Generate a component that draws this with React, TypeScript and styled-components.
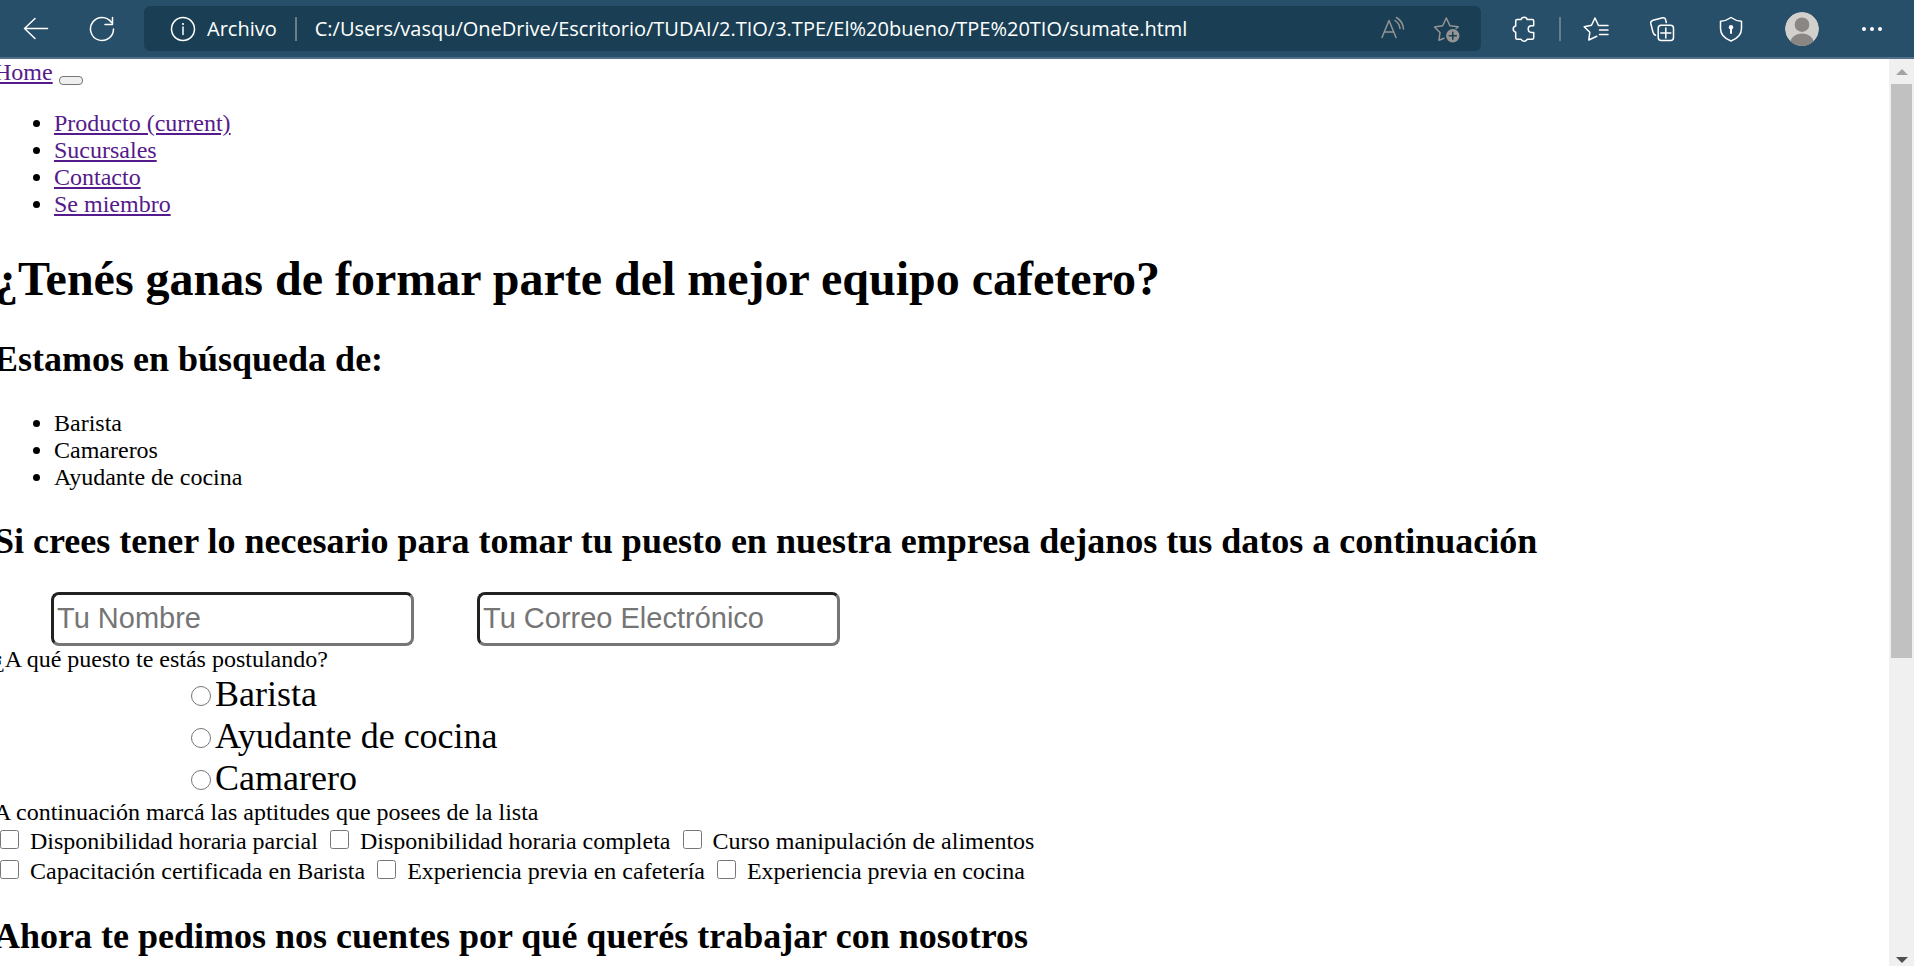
import React from "react";
import styled, { createGlobalStyle } from "styled-components";

const GlobalStyle = createGlobalStyle`
  *, *::before, *::after { box-sizing: border-box; }
  html, body { margin: 0; padding: 0; background: #fff; }
  body { overflow: hidden; }
`;

const Window = styled.div`
  display: flex;
  flex-direction: column;
  height: 100vh;
  padding-right: 6px;
`;

const Toolbar = styled.header`
  display: flex;
  align-items: center;
  flex: none;
  height: 59px;
  padding: 0 26px 0 20px;
  background: #284f69;
  border-bottom: 2px solid #527089;
  color: #fff;
`;

const IconButton = styled.button<{ $gap?: number; $dim?: boolean }>`
  display: flex;
  flex: none;
  align-items: center;
  justify-content: center;
  width: 32px;
  height: 36px;
  margin: 0 ${(p) => p.$gap ?? 0}px 0 0;
  padding: 0;
  border: 0;
  background: none;
  color: ${(p) => (p.$dim ? "#949494" : "#fff")};
`;

const Icon = styled.svg`
  display: block;
  flex: none;
  fill: none;
  stroke: currentColor;
  stroke-width: 1.5;
  stroke-linecap: round;
  stroke-linejoin: round;
`;

const AddressBar = styled.div`
  display: flex;
  flex: 1;
  align-items: center;
  height: 45px;
  margin-right: 27px;
  padding: 0 18px 0 26px;
  border-radius: 6px;
  background: #1a3f54;
`;

const Scheme = styled.span`
  margin-left: 11px;
  font: 20px/28px "Open Sans", "Noto Sans", sans-serif;
`;

const AddressInput = styled.input`
  flex: 1;
  min-width: 0;
  height: 32px;
  padding: 0;
  border: 0;
  outline: 0;
  background: none;
  color: #fff;
  font: 20px/28px "Open Sans", "Noto Sans", sans-serif;
`;

const Divider = styled.span<{ $space: number }>`
  flex: none;
  width: 2px;
  height: 24px;
  margin: 0 ${(p) => p.$space}px 0 0;
  background: #64808f;
`;

const AddressDivider = styled(Divider)`
  margin-left: 18px;
`;

const Body = styled.div`
  display: flex;
  flex: 1;
  min-height: 0;
`;

const Page = styled.main`
  flex: 1;
  min-width: 0;
  overflow: hidden;
  margin-left: -6px;
  color: #000;
  font: 24px/27px "Liberation Serif", "Times New Roman", serif;
`;

const PageLink = styled.a`
  color: #551a8b;
  text-decoration: underline;
`;

const Toggler = styled.button`
  width: 24px;
  height: 9px;
  padding: 0;
  border: 1px solid #767676;
  border-radius: 4px;
  background: #efefef;
  vertical-align: text-bottom;
`;

const List = styled.ul`
  margin: 24px 0;
  padding-left: 60px;
`;

const Title = styled.h1`
  margin: 33px 0;
  font-size: 48px;
  line-height: 55px;
`;

const Subtitle = styled.h2`
  margin: 30px 0;
  font-size: 36px;
  line-height: 41px;
`;

const Fields = styled.div`
  display: flex;
  gap: 63px;
  padding-left: 57px;
`;

const TextField = styled.input`
  width: 363px;
  height: 54px;
  padding: 0 4px 2px 3px;
  border: 3px inset #767676;
  border-radius: 8px;
  background: #fff;
  font: 29px/34px "Liberation Sans", Arial, sans-serif;
  &::placeholder { color: #757575; opacity: 1; }
`;

const Positions = styled.div`
  padding-left: 197px;
  font-size: 36px;
  line-height: 42px;
`;

const Position = styled.label`
  display: flex;
  align-items: center;
  gap: 4px;
  input { width: 20px; height: 20px; margin: 4px 0 0; }
`;

const Skills = styled.div`
  display: flex;
  gap: 12px;
  padding-left: 6px;
  line-height: 30px;
`;

const Skill = styled.label`
  display: flex;
  gap: 11px;
  input { width: 19px; height: 19px; margin: 4px 0 0; }
`;

const Scrollbar = styled.div`
  display: flex;
  flex: none;
  flex-direction: column;
  align-items: center;
  width: 25px;
  background: #f0f0f0;
`;

const ScrollArrow = styled.button<{ $height: number }>`
  display: flex;
  align-items: center;
  justify-content: center;
  width: 25px;
  height: ${(p) => p.$height}px;
  padding: 0;
  border: 0;
  background: none;
`;

const Track = styled.div`
  flex: 1;
  width: 21px;
`;

const Thumb = styled.div`
  height: 66%;
  background: #c1c1c1;
`;

const links = ["Producto (current)", "Sucursales", "Contacto", "Se miembro"];
const openings = ["Barista", "Camareros", "Ayudante de cocina"];
const positions = ["Barista", "Ayudante de cocina", "Camarero"];
const skills = [
  ["Disponibilidad horaria parcial", "Disponibilidad horaria completa", "Curso manipulación de alimentos"],
  ["Capacitación certificada en Barista", "Experiencia previa en cafetería", "Experiencia previa en cocina"],
];

function BrowserToolbar() {
  return (
    <Toolbar>
      <IconButton $gap={34} aria-label="Atrás">
        <Icon width="26" height="26" viewBox="0 0 26 26"><path d="M24.500 12.500H1.500M12 2.500l-10.500 10 10.500 10" /></Icon>
      </IconButton>
      <IconButton $gap={26} aria-label="Actualizar">
        <Icon width="26" height="26" viewBox="0 0 26 26"><path d="M24.500 13A11.500 11.500 0 1 1 22.500 6.500M23.500 1.500V8.500H16" /></Icon>
      </IconButton>
      <AddressBar>
        <Icon width="26" height="26" viewBox="0 0 26 26">
          <circle cx="13" cy="13" r="11.500" />
          <path d="M13 11v7.500" />
          <circle cx="13" cy="8" r="1.100" fill="currentColor" stroke="none" />
        </Icon>
        <Scheme>Archivo</Scheme>
        <AddressDivider $space={18} />
        <AddressInput aria-label="Dirección" defaultValue="C:/Users/vasqu/OneDrive/Escritorio/TUDAI/2.TIO/3.TPE/El%20bueno/TPE%20TIO/sumate.html" />
        <IconButton $gap={22} $dim aria-label="Leer en voz alta">
          <Icon width="26" height="26" viewBox="0 0 26 26"><path d="M2 21.500 9 4.500l7 17M4.200 16h9.600M15 4.500q4.500 3 5 8M16.500 1.500q6.500 4 7 11.500" /></Icon>
        </IconButton>
        <IconButton $dim aria-label="Agregar a favoritos">
          <Icon width="28" height="28" viewBox="0 0 28 28">
            <path d="M11 23.300 6 25.200l1-7.700L1.500 12l8.200-1.300 3.600-7.700 3.600 7.700 8.300 1.100-2 1.600" />
            <circle cx="19.800" cy="20.800" r="6.700" fill="currentColor" stroke="none" />
            <path stroke="#1a3f54" d="M19.800 17.300v7M16.300 20.800h7" />
          </Icon>
        </IconButton>
      </AddressBar>
      <IconButton $gap={19} aria-label="Extensiones">
        <Icon width="26" height="26" viewBox="0 0 26 26" strokeWidth="1.700">
          <path d="M6.200 3.500H10q.8-2.300 3.200-2.300T16.200 3.500h5a1.500 1.500 0 0 1 1.500 1.500v4.800h-2.200a3.300 3.300 0 0 0 0 6.600h2.200v5.400a1.500 1.500 0 0 1-1.500 1.500h-5q-.6 1.900-3 1.900T10 23.300H6.200a1.500 1.500 0 0 1-1.500-1.500v-5.600Q2.200 15.500 2.200 13t2.500-3V5a1.500 1.500 0 0 1 1.500-1.500z" />
        </Icon>
      </IconButton>
      <Divider $space={19} />
      <IconButton $gap={34} aria-label="Favoritos">
        <Icon width="26" height="26" viewBox="0 0 26 26">
          <path d="M25 9.500h-9.500L12 2 8.500 9.300 1.200 10.800 6.800 16.200 5.800 24l8-3.800M16.500 14H25M16.500 18.500H25" />
        </Icon>
      </IconButton>
      <IconButton $gap={37} aria-label="Colecciones">
        <Icon width="26" height="26" viewBox="0 0 26 26">
          <rect x="9.200" y="9.200" width="15.300" height="15.300" rx="3" />
          <path d="M16.800 12v10M11.800 17h10M17.300 6.500l-.8-3.200q-.6-2-2.800-1.600L4 4.200q-2.700.8-2.200 3.300l2.200 8.800q.6 2.100 2.500 2.900" />
        </Icon>
      </IconButton>
      <IconButton $gap={39} aria-label="Seguridad">
        <Icon width="26" height="26" viewBox="0 0 26 26">
          <path d="M13 1.500q4.700 3.400 10.500 3.800v7.200q0 8.500-10.500 12.500Q2.500 21 2.500 12.500V5.300Q8.300 4.900 13 1.500z" />
          <circle cx="13" cy="11.300" r="2.200" fill="currentColor" stroke="none" />
          <path d="M13 12v5" strokeWidth="2" />
        </Icon>
      </IconButton>
      <IconButton $gap={38} aria-label="Perfil">
        <Icon width="34" height="34" viewBox="0 0 34 34">
          <clipPath id="avatar"><circle cx="17" cy="17" r="17" /></clipPath>
          <g clipPath="url(#avatar)" stroke="none">
            <circle cx="17" cy="17" r="17" fill="#d2d0cd" />
            <circle cx="17" cy="12.700" r="7.300" fill="#8a8683" />
            <ellipse cx="17" cy="32" rx="12" ry="10.500" fill="#8a8683" />
          </g>
        </Icon>
      </IconButton>
      <IconButton aria-label="Configuración y más">
        <Icon width="26" height="26" viewBox="0 0 26 26">
          <g fill="currentColor" stroke="none"><circle cx="5" cy="13" r="2" /><circle cx="13" cy="13" r="2" /><circle cx="21" cy="13" r="2" /></g>
        </Icon>
      </IconButton>
    </Toolbar>
  );
}

export default function App() {
  return (
    <Window>
      <GlobalStyle />
      <BrowserToolbar />
      <Body>
        <Page>
          <nav>
            <PageLink href="#home">Home</PageLink> <Toggler aria-label="Menú" />
            <List>{links.map((t) => <li key={t}><PageLink href="#nav">{t}</PageLink></li>)}</List>
          </nav>
          <Title>¿Tenés ganas de formar parte del mejor equipo cafetero?</Title>
          <Subtitle>Estamos en búsqueda de:</Subtitle>
          <List>{openings.map((t) => <li key={t}>{t}</li>)}</List>
          <Subtitle>Si crees tener lo necesario para tomar tu puesto en nuestra empresa dejanos tus datos a continuación</Subtitle>
          <form>
            <Fields>
              <TextField aria-label="Tu Nombre" placeholder="Tu Nombre" />
              <TextField aria-label="Tu Correo Electrónico" placeholder="Tu Correo Electrónico" type="email" />
            </Fields>
            <div>¿A qué puesto te estás postulando?</div>
            <Positions>{positions.map((t) => <Position key={t}><input type="radio" name="puesto" />{t}</Position>)}</Positions>
            <div>A continuación marcá las aptitudes que posees de la lista</div>
            {skills.map((row) => (
              <Skills key={row[0]}>{row.map((t) => <Skill key={t}><input type="checkbox" />{t}</Skill>)}</Skills>
            ))}
          </form>
          <Subtitle>Ahora te pedimos nos cuentes por qué querés trabajar con nosotros</Subtitle>
        </Page>
        <Scrollbar>
          <ScrollArrow $height={25} aria-label="Subir"><svg width="12" height="6"><path d="M0 6 6 0l6 6z" fill="#a3a3a3" /></svg></ScrollArrow>
          <Track><Thumb /></Track>
          <ScrollArrow $height={13} aria-label="Bajar"><svg width="12" height="6"><path d="M0 0h12L6 6z" fill="#505050" /></svg></ScrollArrow>
        </Scrollbar>
      </Body>
    </Window>
  );
}
